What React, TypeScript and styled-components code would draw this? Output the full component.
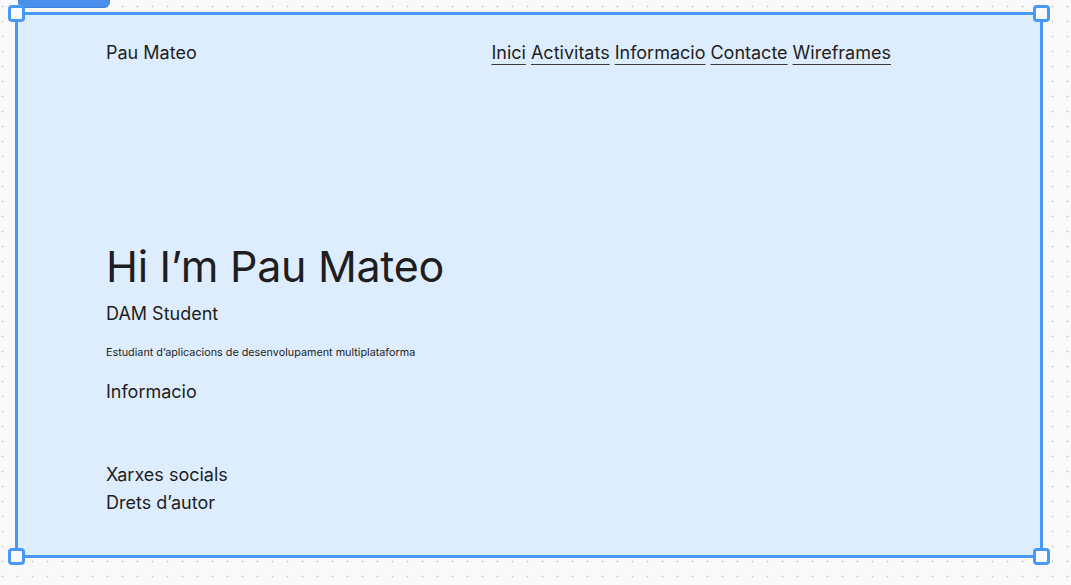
import React from "react";
import styled, { createGlobalStyle } from "styled-components";

const Global = createGlobalStyle`
  html, body { margin: 0; padding: 0; }
  body { font-family: Inter, "Noto Sans", sans-serif; background: #f9f9f9; }
`;

const Canvas = styled.div`
  width: 1071px;
  height: 585px;
  box-sizing: border-box;
  padding: 12px 0 0 15px;
  background-color: #f9f9f9;
  background-image: radial-gradient(circle, #c6c6c6 0.8px, transparent 1.1px);
  background-size: 15px 15px;
  background-position: -5px -1px;
  overflow: hidden;
`;

const Frame = styled.div`
  position: relative;
  width: 1028px;
  height: 546px;
  box-sizing: border-box;
  border: 3px solid #4799f5;
  background: #deedfd;
  color: #1e1e1e;
`;

const Tab = styled.div`
  position: absolute;
  left: 0;
  top: -32px;
  width: 92px;
  height: 25px;
  border-radius: 6px;
  background: #4a90ea;
  border: 1px solid #3f82df;
  box-sizing: border-box;
`;

const Handle = styled.div<{ $x: "left" | "right"; $y: "top" | "bottom" }>`
  position: absolute;
  width: 17px;
  height: 17px;
  box-sizing: border-box;
  border: 3px solid #4799f5;
  border-radius: 4px;
  background: #f9fafc;
  ${(p) => (p.$x === "left" ? "left: -10px;" : "right: -10px;")}
  ${(p) => (p.$y === "top" ? "top: -10px;" : "bottom: -10px;")}
`;

const Content = styled.div`
  display: flex;
  flex-direction: column;
  padding: 0 149px 0 88px;
  height: 100%;
  box-sizing: border-box;
`;

const Header = styled.header`
  display: flex;
  justify-content: space-between;
  align-items: center;
  padding-top: 27px;
  font-size: 18px;
  line-height: 22px;
`;

const Brand = styled.div`
  font-size: 18px;
`;

const Nav = styled.nav`
  display: flex;
  gap: 5px;
`;

const NavLink = styled.a`
  color: #1e1e1e;
  text-decoration: underline;
  text-decoration-thickness: 1px;
  text-underline-offset: 5px;
  text-decoration-color: #3a3a3a;
`;

const Hero = styled.section`
  display: flex;
  flex-direction: column;
  margin-top: 176px;
`;

const Title = styled.h1`
  margin: 0;
  font-size: 43px;
  font-weight: 400;
  line-height: 52px;
  letter-spacing: -0.3px;
`;

const Subtitle = styled.div`
  margin-top: 11px;
  font-size: 18px;
  line-height: 22px;
`;

const Small = styled.div`
  margin-top: 21px;
  font-size: 10.8px;
  line-height: 14px;
`;

const Info = styled.div`
  margin-top: 21px;
  font-size: 18px;
  line-height: 22px;
`;

const Footer = styled.footer`
  display: flex;
  flex-direction: column;
  gap: 6px;
  margin-top: 61px;
  font-size: 18px;
  line-height: 22px;
`;

export default function App() {
  return (
    <>
      <Global />
      <Canvas>
        <Frame>
          <Tab />
          <Handle $x="left" $y="top" />
          <Handle $x="right" $y="top" />
          <Handle $x="left" $y="bottom" />
          <Handle $x="right" $y="bottom" />
          <Content>
            <Header>
              <Brand>Pau Mateo</Brand>
              <Nav>
                <NavLink href="#">Inici</NavLink>
                <NavLink href="#">Activitats</NavLink>
                <NavLink href="#">Informacio</NavLink>
                <NavLink href="#">Contacte</NavLink>
                <NavLink href="#">Wireframes</NavLink>
              </Nav>
            </Header>
            <Hero>
              <Title>Hi I’m Pau Mateo</Title>
              <Subtitle>DAM Student</Subtitle>
              <Small>Estudiant d’aplicacions de desenvolupament multiplataforma</Small>
              <Info>Informacio</Info>
            </Hero>
            <Footer>
              <div>Xarxes socials</div>
              <div>Drets d’autor</div>
            </Footer>
          </Content>
        </Frame>
      </Canvas>
    </>
  );
}
